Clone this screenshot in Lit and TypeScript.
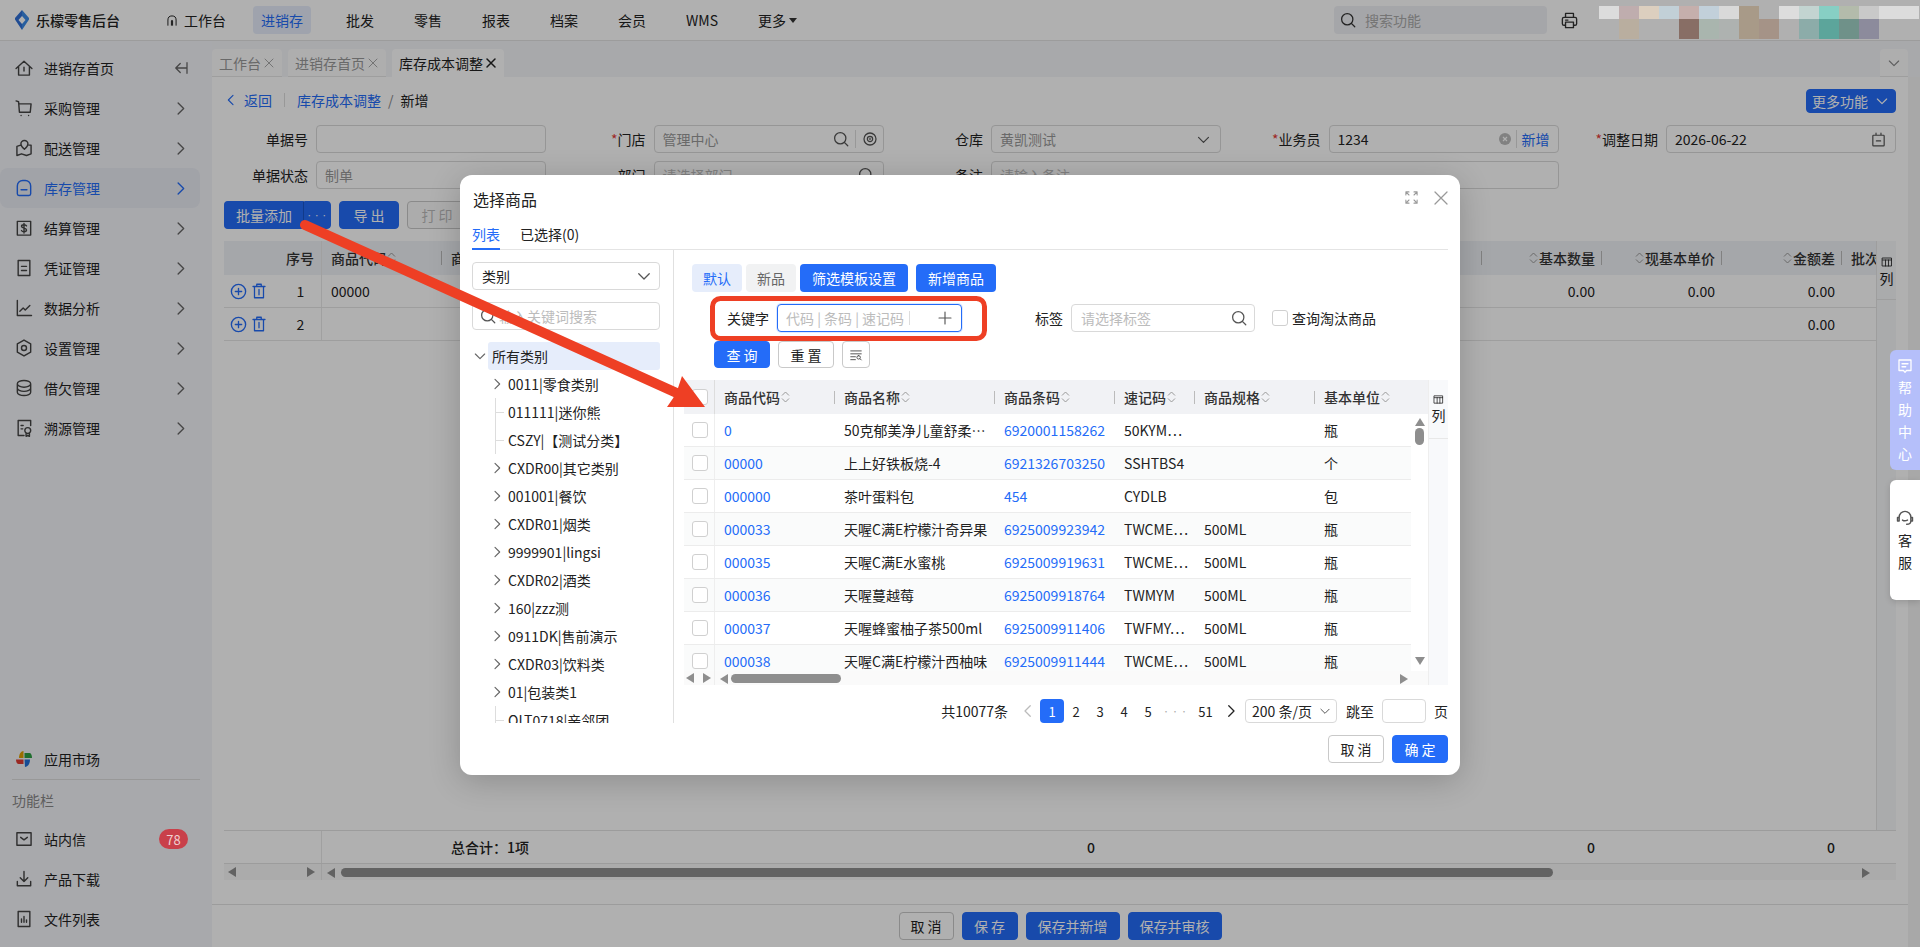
import { LitElement, css, html } from 'lit';
import { customElement } from 'lit/decorators.js';

const P = {
  home: 'M2.500 12.500 12 4l9.500 8.500M5.500 10.500V20.500h13v-10M12 11v4.500',
  cart: 'M2.500 3.500 5.500 4.500l1 12.500h13l1-10H6M8.500 21h.01M17.500 21h.01',
  map: 'M8 8.500 3.500 10v11l5.500-2 6 2 5.500-2V8.500H18M12.500 3a4.200 4.200 0 0 1 4.200 4.200c0 3-4.200 6.300-4.200 6.300s-4.200-3.300-4.200-6.300A4.200 4.200 0 0 1 12.500 3z',
  stock: 'M4 9.500A6.500 6.500 0 0 1 10.500 3h3A6.500 6.500 0 0 1 20 9.500V19a2 2 0 0 1-2 2H6a2 2 0 0 1-2-2zM8.500 14h7',
  settle: 'M4 4h16v16.500H4zM15 9.500c-.5-1-1.500-1.500-3-1.500s-3 .7-3 2 1.500 1.800 3 2.200 3 1 3 2.300-1.500 2-3 2-2.500-.6-3-1.500M12 6.500v11.500',
  voucher: 'M5 3h14v18H5zM9 10h6M9 15h6',
  chart: 'M4 3v18h17M7 16l4-4 2.500 2.500L19 9',
  setting: 'M12 2.500 20 7v10l-8 4.500L4 17V7zM12 9a3 3 0 1 0 0 6 3 3 0 0 0 0-6z',
  db: 'M4 7c0-2.200 3.600-4 8-4s8 1.800 8 4-3.600 4-8 4-8-1.800-8-4zM4 7v10c0 2.200 3.600 4 8 4s8-1.800 8-4V7M4 12c0 2.200 3.600 4 8 4s8-1.800 8-4',
  trace: 'M20 9V3H5v18h7M8.500 9h2.500M8.500 13h2M16.500 11.500a3.500 3.500 0 1 0 0 7 3.500 3.500 0 0 0 0-7zM14.500 18v4l2-1 2 1v-4',
  mail: 'M3.500 4.500h17v15h-17zM8 10l4 3 4-3',
  down: 'M12 3v12M7.500 10.500 12 15l4.500-4.500M4 15v5h16v-5',
  file: 'M5 3h14v18H5zM9 16v-4M12 16V9M15 16v-3',
  right: 'M9 5l7 7-7 7',
  left: 'M15 5l-7 7 7 7',
  chevron: 'M5 9l7 7 7-7',
  search: 'M11 3.500a7.500 7.500 0 1 0 0 15 7.500 7.500 0 0 0 0-15zM16.500 16.500 21 21',
  eye: 'M12 4a8 8 0 1 0 0 16 8 8 0 0 0 0-16zM12 8.500a3.500 3.500 0 1 0 0 7 3.500 3.500 0 0 0 0-7zM12 11v2',
  calendar: 'M5 6h14a1 1 0 0 1 1 1v13a1 1 0 0 1-1 1H5a1 1 0 0 1-1-1V7a1 1 0 0 1 1-1zM8.500 3v3M15.500 3v3M9 14h6',
  printer: 'M7 8V3h10v5M7 18H5a2 2 0 0 1-2-2v-6a2 2 0 0 1 2-2h14a2 2 0 0 1 2 2v6a2 2 0 0 1-2 2h-2M7 14h10v7H7zM7 11.500h3',
  collapse: 'M20 12H6M11 6l-6 6 6 6M20 5v14',
  workbench: 'M5 21v-9a7 7 0 0 1 14 0v9M11 21v-7.500a1 1 0 0 1 2 0V21',
  plusCircle: 'M12 3a9 9 0 1 0 0 18 9 9 0 0 0 0-18zM12 8v8M8 12h8',
  trash: 'M4 6h16M9 6V3h6v3M6 6v15h12V6M12 10v7',
  expand: 'M3 8V3h5M21 8V3h-5M3 16v5h5M21 16v5h-5M3 3l5 5M21 3l-5 5M3 21l5-5M21 21l-5-5',
  close: 'M4 4l16 16M20 4 4 20',
  plus: 'M12 3v18M3 12h18',
  filter: 'M3 5h18M3 10h18M3 15h8M3 20h8M16.500 13a3 3 0 1 0 0 6 3 3 0 0 0 0-6zM19 18.500l2 2',
  columns: 'M3 4h18v16H3zM3 8h18M9 8v12M15 8v12',
  chat: 'M4 4h16v14h-6l-2 2.500L10 18H4zM8 9h8M8 13h5',
  headset: 'M5 15V11a7 7 0 0 1 14 0v4M3 11.500v4h2v-4zM19 11.500v4h2v-4zM19 15.500c0 2.500-2 4-5 4M9 14.500c1.500 1 4 1 6 0',
};

const icon = (d: string, size = 16, cls = '') =>
  html`<svg class="ico ${cls}" width=${size} height=${size} viewBox="0 0 24 24" fill="none" stroke="currentColor" stroke-width="1.700" stroke-linecap="round" stroke-linejoin="round"><path d=${d}></path></svg>`;

const sortIcon = () =>
  html`<svg class="sort" width="9" height="14" viewBox="0 0 9 14" fill="none" stroke="#999" stroke-width="1"><path d="M1 5.500l3.500-3.500 3.500 3.500M1 8.500l3.500 3.500 3.500-3.500"></path></svg>`;

const arrowTri = (dir: 'l' | 'r' | 'u' | 'd', fill: string) => {
  const pts = { l: '8,0 8,10 0,5', r: '0,0 0,10 8,5', u: '0,8 10,8 5,0', d: '0,0 10,0 5,8' }[dir];
  const w = dir === 'l' || dir === 'r' ? 8 : 10;
  const h = dir === 'l' || dir === 'r' ? 10 : 8;
  return html`<svg width=${w} height=${h} viewBox="0 0 ${w} ${h}" fill=${fill}><polygon points=${pts}></polygon></svg>`;
};

const shared = css`
  * { box-sizing: border-box; }
  .ico { flex: none; display: block; }
  .btn {
    display: inline-flex; align-items: center; justify-content: center; height: 28px; flex: none;
    border-radius: 4px; font-size: 14px; border: 1px solid #c9c9c9; background: #fff; color: #222; white-space: pre;
  }
  .btn.primary { background: #246cf8; border-color: #246cf8; color: #fff; }
  .input {
    display: flex; align-items: center; height: 28px; border: 1px solid #d9d9d9; border-radius: 4px; padding: 0 8px;
    background: #fff; color: #222; font-size: 14px; min-width: 0;
  }
  .ph { color: #bcbcbc; white-space: nowrap; }
  .grow { flex: 1; }
  .muted-ico { color: #555; }
  .vline { width: 1px; height: 20px; background: #ddd; flex: none; }
`;

const TREE = [
  { t: '0011|零食类别', k: 'c' }, { t: '011111|迷你熊', k: 'l' }, { t: 'CSZY|【测试分类】', k: 'l' },
  { t: 'CXDR00|其它类别', k: 'c' }, { t: '001001|餐饮', k: 'c' }, { t: 'CXDR01|烟类', k: 'c' },
  { t: '9999901|lingsi', k: 'c' }, { t: 'CXDR02|酒类', k: 'c' }, { t: '160|zzz测', k: 'c' },
  { t: '0911DK|售前演示', k: 'c' }, { t: 'CXDR03|饮料类', k: 'c' }, { t: '01|包装类1', k: 'c' },
  { t: 'OLT0718|亲邻团', k: 'l' },
];

const GOODS = [
  ['0', '50克郁美净儿童舒柔⋯', '6920001158262', '50KYM⋯', '', '瓶'],
  ['00000', '上上好铁板烧-4', '6921326703250', 'SSHTBS4', '', '个'],
  ['000000', '茶叶蛋料包', '454', 'CYDLB', '', '包'],
  ['000033', '天喔C满E柠檬汁奇异果', '6925009923942', 'TWCME⋯', '500ML', '瓶'],
  ['000035', '天喔C满E水蜜桃', '6925009919631', 'TWCME⋯', '500ML', '瓶'],
  ['000036', '天喔蔓越莓', '6925009918764', 'TWMYM', '500ML', '瓶'],
  ['000037', '天喔蜂蜜柚子茶500ml', '6925009911406', 'TWFMY⋯', '500ML', '瓶'],
  ['000038', '天喔C满E柠檬汁西柚味', '6925009911444', 'TWCME⋯', '500ML', '瓶'],
];

const GOODS_HEAD = ['商品代码', '商品名称', '商品条码', '速记码', '商品规格', '基本单位'];

@customElement('goods-picker')
export class GoodsPicker extends LitElement {
  static override styles = [shared, css`
    :host { display: flex; flex-direction: column; height: 100%; padding: 0 12px; font-size: 14px; color: #222; background: #fff; border-radius: 12px; }
    .head { height: 47px; flex: none; display: flex; align-items: center; padding: 0 0 0 1px; font-size: 16px; color: #222; }
    .head .acts { margin: -2px -2px 0 auto; display: flex; align-items: center; gap: 13px; color: #999; }
    .tabs { height: 28px; flex: none; display: flex; gap: 20px; border-bottom: 1px solid #e4e4e4; }
    .tabs span { height: 28px; line-height: 24px; }
    .tabs .on { color: #246cf8; border-bottom: 2px solid #246cf8; }
    .body { display: flex; height: 473px; flex: none; }
    .side { width: 202px; flex: none; border-right: 1px solid #e0e0e0; padding-top: 12px; overflow: hidden; }
    .side .input { width: 188px; }
    .side .sel { height: 28px; justify-content: space-between; padding: 0 6px 0 9px; }
    .side .find { margin-top: 12px; gap: 2px; padding-left: 6px; }
    .tree { margin-top: 12px; width: 188px; }
    .node { height: 28px; display: flex; align-items: center; position: relative; padding-left: 36px; white-space: nowrap; }
    .node .tw { position: absolute; left: 17px; color: #666; }
    .node.root { padding-left: 20px; }
    .node.root .tw { left: 0; }
    .node.root .lab { background: #e6edfb; margin-left: -4px; padding-left: 4px; width: 172px; line-height: 28px; border-radius: 3px; }
    .node.leaf::before { content: ''; position: absolute; left: 23px; top: 0; bottom: 0; border-left: 1px solid #ddd; }
    .node.leaf::after { content: ''; position: absolute; left: 23px; width: 9px; top: 14px; border-top: 1px solid #ddd; }
    .main { flex: 1; min-width: 0; padding: 14px 0 0 10px; display: flex; flex-direction: column; }
    .quick { display: flex; gap: 4px; margin-left: 8px; }
    .quick .btn { border: 0; padding: 0; }
    .quick .def { width: 50px; background: #e6edfb; color: #246cf8; }
    .quick .new { width: 50px; background: #f1f2f3; color: #666; }
    .quick .w108 { width: 108px; margin-right: 4px; }
    .quick .w80 { width: 80px; }
    .filters { display: flex; align-items: center; margin-top: 12px; margin-left: 43px; }
    .filters .kw { width: 185px; border-color: #246cf8; box-shadow: 0 0 0 1px rgba(36, 108, 248, .15); margin-left: 8px; }
    .filters .kw .vline { height: 14px; margin-left: 5px; }
    .filters .tag { width: 184px; margin-left: 8px; padding: 0 6px 0 9px; }
    .filters .tl { margin-left: 73px; }
    .chk { width: 16px; height: 16px; border: 1px solid #d0d0d0; border-radius: 3px; background: #fff; flex: none; }
    .filters .chk { margin-left: 17px; margin-right: 4px; }
    .query { display: flex; gap: 8px; margin: 9px 0 0 30px; }
    .query .btn { height: 27px; width: 56px; }
    .query .btn.sq { width: 28px; color: #555; }
    .tbl { margin-top: 12px; display: flex; flex: none; height: 305px; }
    .tbl-main { width: 744px; flex: none; display: flex; flex-direction: column; }
    .cols { display: grid; grid-template-columns: 31px 120px 160px 120px 80px 120px 113px; }
    .thead { height: 34px; background: #f1f2f5; flex: none; }
    .thead > div { display: flex; align-items: center; position: relative; padding-left: 9px; font-weight: 500; color: #333; gap: 1px; }
    .thead > div:first-child { padding-left: 8px; border-right: 1px solid #ddd; }
    .thead > div:nth-child(2) { padding-left: 9px; }
    .thead > div:nth-child(n + 3)::before { content: ''; position: absolute; left: -1px; top: 11px; height: 13px; border-left: 1px solid #bbb; }
    .tbody { height: 257px; flex: none; display: flex; overflow: hidden; }
    .rows { width: 727px; flex: none; }
    .rows .cols { grid-template-columns: 31px 120px 160px 120px 80px 120px 96px; height: 33px; border-bottom: 1px solid #ececec; }
    .rows .cols:nth-child(even) { background: #fafbfb; }
    .rows .cols > div { display: flex; align-items: center; padding-left: 9px; white-space: nowrap; overflow: hidden; }
    .rows .cols > div:first-child { padding-left: 8px; border-right: 1px solid #eee; }
    .rows .link { color: #246cf8; }
    .vbar { width: 17px; flex: none; display: flex; flex-direction: column; align-items: center; padding: 4px 0 6px; background: #fff; }
    .vbar i { display: block; width: 9px; height: 17px; border-radius: 5px; background: #8e8e8e; margin-top: 2px; }
    .vbar svg:last-child { margin-top: auto; }
    .hbar { height: 14px; display: flex; align-items: center; background: #fafafa; flex: none; }
    .hbar .fix { width: 31px; display: flex; justify-content: space-between; padding: 0 3px 0 2px; border-right: 1px solid #eee; height: 14px; align-items: center; }
    .hbar i { display: block; width: 110px; height: 9px; border-radius: 5px; background: #8e8e8e; margin-left: 3px; }
    .hbar .a { margin-left: 5px; }
    .hbar .b { margin-left: auto; margin-right: 20px; }
    .colp { width: 20px; flex: none; background: #f8f9fb; border-left: 1px solid #eee; }
    .colp div { height: 59px; border-bottom: 1px solid #e8e8e8; display: flex; flex-direction: column; align-items: center; padding-top: 14px; line-height: 20px; }
    .pager { display: flex; align-items: center; justify-content: flex-end; height: 24px; margin-top: 14px; }
    .pager .p { width: 24px; height: 24px; display: flex; align-items: center; justify-content: center; font-size: 13px; flex: none; }
    .pager .on { background: #246cf8; color: #fff; border-radius: 4px; }
    .pager .dots { width: 32px; color: #aaa; letter-spacing: 2px; font-size: 7px; }
    .pager .n51 { width: 27px; }
    .pager .size { width: 92px; height: 24px; margin-left: 2px; justify-content: space-between; padding: 0 4px 0 6px; white-space: nowrap; }
    .pager .jump { width: 44px; height: 24px; margin: 0 8px; }
    .total { margin-right: 8px; }
    .foot { display: flex; justify-content: flex-end; gap: 8px; margin-top: 12px; }
    .foot .btn { width: 56px; }
  `];

  override render() {
    return html`
      <div class="head">选择商品<div class="acts">${icon(P.expand, 15)}${icon(P.close, 18)}</div></div>
      <div class="tabs"><span class="on">列表</span><span>已选择(0)</span></div>
      <div class="body">
        <div class="side">
          <div class="input sel">类别${icon(P.chevron, 18, 'muted-ico')}</div>
          <div class="input find">${icon(P.search, 18, 'muted-ico')}<span class="ph">输入关键词搜索</span></div>
          <div class="tree">
            <div class="node root"><span class="tw">${icon(P.chevron, 16)}</span><span class="lab">所有类别</span></div>
            ${TREE.map(n => html`<div class="node ${n.k === 'l' ? 'leaf' : ''}">
              ${n.k === 'c' ? html`<span class="tw">${icon(P.right, 16)}</span>` : null}${n.t}</div>`)}
          </div>
        </div>
        <div class="main">
          <div class="quick">
            <span class="btn def">默认</span><span class="btn new">新品</span>
            <span class="btn primary w108">筛选模板设置</span><span class="btn primary w80">新增商品</span>
          </div>
          <div class="filters">
            <span>关键字</span>
            <div class="input kw"><span class="ph">代码 | 条码 | 速记码</span><span class="vline"></span><span class="grow"></span>${icon(P.plus, 16, 'muted-ico')}</div>
            <span class="tl">标签</span>
            <div class="input tag"><span class="ph">请选择标签</span><span class="grow"></span>${icon(P.search, 18, 'muted-ico')}</div>
            <span class="chk"></span><span>查询淘汰商品</span>
          </div>
          <div class="query">
            <span class="btn primary">查 询</span><span class="btn">重 置</span><span class="btn sq">${icon(P.filter, 14)}</span>
          </div>
          <div class="tbl">
            <div class="tbl-main">
              <div class="cols thead">
                <div><span class="chk"></span></div>
                ${GOODS_HEAD.map(h => html`<div>${h}${sortIcon()}</div>`)}
              </div>
              <div class="tbody">
                <div class="rows">
                  ${GOODS.map(g => html`<div class="cols">
                    <div><span class="chk"></span></div>
                    <div class="link">${g[0]}</div><div>${g[1]}</div><div class="link">${g[2]}</div>
                    <div>${g[3]}</div><div>${g[4]}</div><div>${g[5]}</div>
                  </div>`)}
                </div>
                <div class="vbar">${arrowTri('u', '#8e8e8e')}<i></i>${arrowTri('d', '#8e8e8e')}</div>
              </div>
              <div class="hbar">
                <div class="fix">${arrowTri('l', '#8e8e8e')}${arrowTri('r', '#8e8e8e')}</div>
                <span class="a">${arrowTri('l', '#8e8e8e')}</span><i></i>
                <span class="b">${arrowTri('r', '#8e8e8e')}</span>
              </div>
            </div>
            <div class="colp"><div>${icon(P.columns, 11)}<span>列</span></div></div>
          </div>
          <div class="pager">
            <span class="total">共10077条</span>
            <span class="p" style="color:#bbb">${icon(P.left, 18)}</span>
            <span class="p on">1</span><span class="p">2</span><span class="p">3</span><span class="p">4</span><span class="p">5</span>
            <span class="p dots">•••</span><span class="p n51">51</span>
            <span class="p">${icon(P.right, 18)}</span>
            <div class="input size">200 条/页${icon(P.chevron, 14, 'muted-ico')}</div>
            <span style="margin-left:9px">跳至</span><div class="input jump"></div><span>页</span>
          </div>
        </div>
      </div>
      <div class="foot"><span class="btn">取 消</span><span class="btn primary">确 定</span></div>
    `;
  }
}

const MENU = [
  ['进销存首页', P.home], ['采购管理', P.cart], ['配送管理', P.map], ['库存管理', P.stock], ['结算管理', P.settle],
  ['凭证管理', P.voucher], ['数据分析', P.chart], ['设置管理', P.setting], ['借欠管理', P.db], ['溯源管理', P.trace],
];

const MOSAIC = [
  '#dcdcdc', '#bfadae', '#dccfbf', '#c2d0d7', '#c5afac', '#c2d0da', '#d9d9d9', '#a89a88', '#b0b0b0', '#dddddd', '#c3d4d1', '#87cfc4', '#b3bbab', '#c9c9c9', '#dcdcdc', '#dcdcdc',
  '#b0b0b0', '#b9ae9f', '#b0b0b0', '#b0b0b0', '#886e65', '#a9b5ae', '#aeb2b0', '#a89a88', '#a59387', '#b0b0b0', '#8caca9', '#5ca59b', '#6f9189', '#8c8b9c', '#b0b0b0', '#b0b0b0',
];

@customElement('app-root')
export class AppRoot extends LitElement {
  static override styles = [shared, css`
    :host { display: block; position: relative; width: 100%; height: 947px; overflow: hidden; background: #fff; color: #222; font: 14px "Noto Sans CJK SC", "Noto Sans", sans-serif; }
    .top { height: 41px; display: flex; align-items: center; border-bottom: 1px solid #e2e2e2; background: #fff; padding-left: 15px; }
    .brand { display: flex; align-items: center; gap: 7px; font-weight: 500; width: 142px; white-space: nowrap; flex: none; }
    .nav { display: flex; gap: 24px; align-items: center; }
    .nav span.it { display: flex; align-items: center; height: 28px; padding: 0 8px; gap: 5px; border-radius: 4px; white-space: nowrap; }
    .nav span.on { background: #e6edfb; color: #246cf8; margin: 0 3px 0 -5px; }
    .nav .caret { width: 0; height: 0; border: 4px solid transparent; border-top: 5px solid #333; border-bottom: 0; margin-left: -2px; }
    .top-search { margin-left: auto; width: 213px; height: 28px; border-radius: 4px; background: #f0f1f5; display: flex; align-items: center; gap: 8px; padding-left: 5px; color: #333; }
    .printer { margin: 0 20px 0 13px; color: #333; }
    .mosaic { position: relative; z-index: 3; align-self: flex-start; margin-top: 6px; display: grid; grid-template-columns: repeat(16, 20px); grid-template-rows: 13px 20px; width: 321px; }
    .shell { display: flex; height: 906px; }
    .menu { width: 212px; flex: none; background: #f4f5f9; padding-top: 7px; display: flex; flex-direction: column; }
    .mi { height: 40px; width: 200px; flex: none; display: flex; align-items: center; gap: 10px; padding: 0 10px 0 14px; border-radius: 8px; white-space: nowrap; color: #222; }
    .mi .ico:first-child { color: #444; }
    .mi .end { margin-left: auto; color: #666; }
    .mi.on { background: #e9ecf3; color: #246cf8; }
    .mi.on .ico, .mi.on .ico:first-child { color: #246cf8; }
    .badge { position: relative; z-index: 3; margin-left: auto; margin-right: 2px; width: 29px; height: 20px; border-radius: 10px; background: #c9404a; color: #f0d0d0; font-size: 13px; display: flex; align-items: center; justify-content: center; }
    .menu-foot { margin-top: auto; padding-bottom: 8px; }
    .menu-foot hr { border: 0; border-top: 1px solid #ddd; margin: 0 12px; width: 188px; }
    .menu-cap { height: 39px; padding-left: 12px; display: flex; align-items: center; color: #888; }
    .wrap { flex: 1; min-width: 0; display: flex; flex-direction: column; }
    .tabbar { height: 36px; flex: none; background: #f4f5f8; display: flex; align-items: flex-end; gap: 6px; }
    .tab { height: 28px; background: #fcfcfd; border-bottom: 1px solid #e5e5e5; border-radius: 4px 4px 0 0; display: flex; align-items: center; justify-content: center; gap: 2px; color: #999; white-space: nowrap; }
    .tab.on { background: #fff; color: #222; border-bottom: 0; }
    .tab.on .ico { stroke-width: 3; }
    .tab.w70 { width: 70px; } .tab.w98 { width: 98px; } .tab.w112 { width: 112px; }
    .tab-more { margin-left: auto; width: 28px; margin-right: 12px; color: #888; }
    .page { flex: 1; min-height: 0; display: flex; }
    .pagebar { width: 12px; flex: none; background: #f4f4f4; }
    .content { flex: 1; min-width: 0; display: flex; flex-direction: column; padding: 12px 12px 0; }
    .crumb { height: 24px; flex: none; display: flex; align-items: center; color: #246cf8; padding-bottom: 2px; }
    .crumb .back { gap: 5px; display: flex; align-items: center; margin-left: -1px; }
    .crumb .sp { width: 1px; height: 14px; background: #ddd; margin: 0 12px; }
    .crumb .sl { color: #888; margin: 0 7px; }
    .crumb .cur { color: #222; }
    .more { margin-left: auto; width: 90px; height: 24px; gap: 6px; align-self: flex-start; }
    .form { display: grid; grid-template-columns: repeat(5, 322px); column-gap: 15.5px; row-gap: 8px; margin-top: 12px; }
    .f { display: grid; grid-template-columns: 84px 1fr; column-gap: 8px; align-items: center; }
    .f.wide { grid-column: span 2; grid-template-columns: 84px 1fr; }
    .f label { text-align: right; white-space: nowrap; color: #222; }
    .f label b { color: #e53935; font-weight: 400; }
    .f .val { color: #999; }
    .f .input { gap: 5px; }
    .eye { margin-right: -4px; }
    .clear { width: 12px; height: 12px; flex: none; }
    .tools { display: flex; gap: 8px; margin-top: 12px; }
    .split { display: flex; }
    .split .btn:first-child { width: 80px; border-radius: 4px 0 0 4px; border-right-color: #1a55c9; }
    .split .btn:last-child { width: 27px; border-radius: 0 4px 4px 0; letter-spacing: 1.500px; font-size: 6px; }
    .w60 { width: 60px; }
    .btn.off { color: #bbb; background: #fafafa; }
    .grid { flex: 1; min-height: 0; margin: 12px 0 24px; display: flex; flex-direction: column; }
    .g-top { flex: 1; display: flex; min-height: 0; }
    .g-cols { width: 1652px; flex: none; }
    .g-row { display: grid; grid-template-columns: 98px 120px 1040px 120px 120px 120px 34px; }
    .g-row > div { display: flex; align-items: center; padding: 0 7px 0 9px; white-space: nowrap; overflow: hidden; }
    .g-row > div:first-child { border-right: 1px solid #e8e8e8; padding: 0 0 0 5px; gap: 2px; }
    .g-head { height: 34px; background: #f0f2f6; font-weight: 500; color: #333; }
    .g-head > div { position: relative; }
    .g-head .r { justify-content: flex-end; gap: 1px; }
    .g-body { height: 33px; border-bottom: 1px solid #e5e5e5; }
    .g-body .r { justify-content: flex-end; }
    .idx { width: 27px; margin-left: 17px; text-align: center; flex: none; }
    .blue { color: #246cf8; }
    .dv { position: absolute; right: 0; top: 10px; height: 14px; border-right: 1px solid #bbb; }
    .colp { width: 20px; flex: none; background: #f7f8fa; border-left: 1px solid #e5e5e5; }
    .colp div { height: 59px; border-bottom: 1px solid #e5e5e5; display: flex; flex-direction: column; align-items: center; padding-top: 15px; line-height: 20px; }
    .g-total { height: 34px; flex: none; border-top: 1px solid #e2e2e2; border-bottom: 1px solid #e2e2e2; display: grid; grid-template-columns: 98px 120px 1040px 120px 120px 120px; font-weight: 500; }
    .g-total > div { display: flex; align-items: center; padding-right: 7px; justify-content: flex-end; }
    .g-total > div:first-child { border-right: 1px solid #e8e8e8; }
    .g-total .sum { justify-content: space-between; padding: 0 387px 0 9px; }
    .g-scroll { height: 16px; flex: none; display: flex; align-items: center; background: #f8f8f8; }
    .g-scroll .fix { width: 98px; height: 16px; flex: none; display: flex; align-items: center; justify-content: space-between; padding: 0 6px 0 4px; border-right: 1px solid #e8e8e8; }
    .g-scroll .a { margin-left: 5px; }
    .g-scroll i { display: block; width: 1212px; height: 9px; border-radius: 5px; background: #8e8e8e; margin-left: 6px; }
    .g-scroll .b { margin-left: auto; margin-right: 26px; }
    .bottom { height: 43px; flex: none; border-top: 1px solid #e2e2e2; margin: 0 -12px; display: flex; justify-content: center; gap: 8px; padding: 7px 0 0 0; }
    .bottom .w56 { width: 55px; } .bottom .w57 { width: 56px; } .bottom .w94 { width: 94px; }
    .bottom-in { display: flex; gap: 8px; }
    .mask { position: absolute; inset: 0; background: rgba(0, 0, 0, .31); z-index: 2; }
    .dialog { position: absolute; left: 460px; top: 175px; width: 1000px; height: 600px; z-index: 3; box-shadow: 0 6px 32px rgba(0, 0, 0, .2); border-radius: 12px; }
    .notes { position: absolute; inset: 0; z-index: 4; pointer-events: none; }
    .wid { position: absolute; right: 0; width: 30px; height: 120px; z-index: 3; border-radius: 6px 0 0 6px; display: flex; flex-direction: column; align-items: center; }
    .wid span { width: 14px; line-height: 22px; font-size: 14px; }
    .wid.help { top: 350px; background: #b5bffa; color: #fff; padding-top: 7px; gap: 1px; }
    .wid.kf { top: 480px; background: #fff; color: #222; justify-content: center; gap: 1px; box-shadow: 0 2px 6px rgba(0, 0, 0, .15); }
    .wid.kf .ico { color: #555; }
  `];

  private fieldInput(label: string, star: boolean, body: unknown, wide = false) {
    return html`<div class="f ${wide ? 'wide' : ''}"><label>${star ? html`<b>*</b>` : null}${label}</label>${body}</div>`;
  }

  override render() {
    return html`
      <div class="top">
        <div class="brand">
          <svg width="14" height="20" viewBox="0 0 14 20"><path fill="#2f6fd6" d="M7 0 0 8c-.3.4-.3 1 0 1.500L7 20v-6L3.500 10 7 6z"></path><path fill="#3b8ae6" d="M7 0l7 8c.3.4.3 1 0 1.500L7 20v-6l3.500-4L7 6z"></path></svg>
          乐檬零售后台
        </div>
        <div class="nav">
          <span class="it">${icon(P.workbench, 14)}工作台</span>
          <span class="it on">进销存</span>
          ${['批发', '零售', '报表', '档案', '会员', 'WMS'].map(t => html`<span class="it">${t}</span>`)}
          <span class="it">更多<span class="caret"></span></span>
        </div>
        <div class="top-search">${icon(P.search, 18)}<span class="ph" style="color:#aaa">搜索功能</span></div>
        <span class="printer">${icon(P.printer, 19)}</span>
        <div class="mosaic">${MOSAIC.map(c => html`<div style="background:${c}"></div>`)}</div>
      </div>
      <div class="shell">
        <div class="menu">
          ${MENU.map(([t, d], i) => html`<div class="mi ${i === 3 ? 'on' : ''}">
            ${icon(d, 20)}${t}${icon(i === 0 ? P.collapse : P.right, i === 0 ? 18 : 19, 'end')}</div>`)}
          <div class="menu-foot">
            <div class="mi">
              <svg class="ico" style="margin:0 1px" width="18" height="18" viewBox="0 0 18 18"><path fill="#e0a100" d="M8.500 1v7H4c0-4 2-7 4.500-7z"></path><path fill="#2ea043" d="M9.500 3h5c1.500 0 2.500 2 2.500 5H9.500z"></path><path fill="#1f6fd8" d="M9.500 9.500H15c0 4-2 7.500-5 7.500z"></path><path fill="#e03b32" d="M1 9.500h7.500V14H3.500C2 14 1 12 1 9.500z"></path></svg>
              应用市场
            </div>
            <hr />
            <div class="menu-cap">功能栏</div>
            <div class="mi">${icon(P.mail, 20)}站内信<span class="badge">78</span></div>
            <div class="mi">${icon(P.down, 20)}产品下载</div>
            <div class="mi">${icon(P.file, 20)}文件列表</div>
          </div>
        </div>
        <div class="wrap">
          <div class="tabbar">
            <span class="tab w70">工作台 ${icon(P.close, 12)}</span>
            <span class="tab w98">进销存首页 ${icon(P.close, 12)}</span>
            <span class="tab w112 on">库存成本调整 ${icon(P.close, 12)}</span>
            <span class="tab tab-more">${icon(P.chevron, 16)}</span>
          </div>
          <div class="page">
            <div class="content">
              <div class="crumb">
                <span class="back">${icon(P.left, 16)}返回</span><span class="sp"></span>库存成本调整<span class="sl">/</span><span class="cur">新增</span>
                <span class="btn primary more">更多功能${icon(P.chevron, 16)}</span>
              </div>
              <div class="form">
                ${this.fieldInput('单据号', false, html`<div class="input"></div>`)}
                ${this.fieldInput('门店', true, html`<div class="input"><span class="val">管理中心</span><span class="grow"></span>${icon(P.search, 18, 'muted-ico')}<span class="vline" style="height:18px"></span>${icon(P.eye, 18, 'muted-ico eye')}</div>`)}
                ${this.fieldInput('仓库', false, html`<div class="input"><span class="val">黄凯测试</span><span class="grow"></span>${icon(P.chevron, 17, 'muted-ico')}</div>`)}
                ${this.fieldInput('业务员', true, html`<div class="input"><span>1234</span><span class="grow"></span><svg class="clear" viewBox="0 0 12 12"><circle cx="6" cy="6" r="6" fill="#bbb"></circle><path d="M4 4l4 4M8 4l-4 4" stroke="#fff" stroke-width="1.200"></path></svg><span class="vline" style="height:18px"></span><span class="blue">新增</span></div>`)}
                ${this.fieldInput('调整日期', true, html`<div class="input"><span>2026-06-22</span><span class="grow"></span>${icon(P.calendar, 17, 'muted-ico')}</div>`)}
                ${this.fieldInput('单据状态', false, html`<div class="input"><span class="val">制单</span></div>`)}
                ${this.fieldInput('部门', false, html`<div class="input"><span class="ph">请选择部门</span><span class="grow"></span>${icon(P.search, 18, 'muted-ico')}</div>`)}
                ${this.fieldInput('备注', false, html`<div class="input"><span class="ph">请输入备注</span></div>`, true)}
              </div>
              <div class="tools">
                <div class="split"><span class="btn primary">批量添加</span><span class="btn primary">•••</span></div>
                <span class="btn primary w60">导 出</span>
                <span class="btn off w60">打 印</span>
              </div>
              <div class="grid">
                <div class="g-top">
                  <div class="g-cols">
                    <div class="g-row g-head">
                      <div style="justify-content:flex-end;padding-right:7px">序号</div>
                      <div>商品代码${sortIcon()}<span class="dv"></span></div>
                      <div>商品名称<span class="dv"></span></div>
                      <div class="r">${sortIcon()}基本数量<span class="dv"></span></div>
                      <div class="r">${sortIcon()}现基本单价<span class="dv"></span></div>
                      <div class="r">${sortIcon()}金额差<span class="dv"></span></div>
                      <div>批次</div>
                    </div>
                    <div class="g-row g-body">
                      <div class="blue">${icon(P.plusCircle, 19)}${icon(P.trash, 18)}<span class="idx" style="color:#222">1</span></div>
                      <div>00000</div><div></div>
                      <div class="r">0.00</div><div class="r">0.00</div><div class="r">0.00</div><div></div>
                    </div>
                    <div class="g-row g-body">
                      <div class="blue">${icon(P.plusCircle, 19)}${icon(P.trash, 18)}<span class="idx" style="color:#222">2</span></div>
                      <div></div><div></div><div></div><div></div><div class="r">0.00</div><div></div>
                    </div>
                  </div>
                  <div class="colp"><div>${icon(P.columns, 12)}<span>列</span></div></div>
                </div>
                <div class="g-total">
                  <div></div><div></div>
                  <div class="sum"><span>总合计：1项</span><span>0</span></div>
                  <div>0</div><div></div><div>0</div>
                </div>
                <div class="g-scroll">
                  <div class="fix">${arrowTri('l', '#8e8e8e')}${arrowTri('r', '#8e8e8e')}</div>
                  <span class="a">${arrowTri('l', '#8e8e8e')}</span><i></i>
                  <span class="b">${arrowTri('r', '#8e8e8e')}</span>
                </div>
              </div>
              <div class="bottom">
                <div class="bottom-in">
                  <span class="btn w56">取 消</span><span class="btn primary w57">保 存</span>
                  <span class="btn primary w94">保存并新增</span><span class="btn primary w94">保存并审核</span>
                </div>
              </div>
            </div>
            <div class="pagebar"></div>
          </div>
        </div>
      </div>
      <div class="mask"></div>
      <div class="dialog"><goods-picker></goods-picker></div>
      <div class="wid help">${icon(P.chat, 18)}<span>帮助中心</span></div>
      <div class="wid kf">${icon(P.headset, 20)}<span>客服</span></div>
      <svg class="notes" width="1920" height="947" viewBox="0 0 1920 947">
        <rect x="712.500" y="298.500" width="272" height="40" rx="8" fill="none" stroke="#ee3f24" stroke-width="5"></rect>
        <line x1="305" y1="225" x2="690" y2="399" stroke="#ee3f24" stroke-width="10" stroke-linecap="round"></line>
        <polygon points="682,376 705,407 667,407 676,394" fill="#ee3f24"></polygon>
      </svg>
    `;
  }
}

declare global {
  interface HTMLElementTagNameMap {
    'app-root': AppRoot;
    'goods-picker': GoodsPicker;
  }
}
